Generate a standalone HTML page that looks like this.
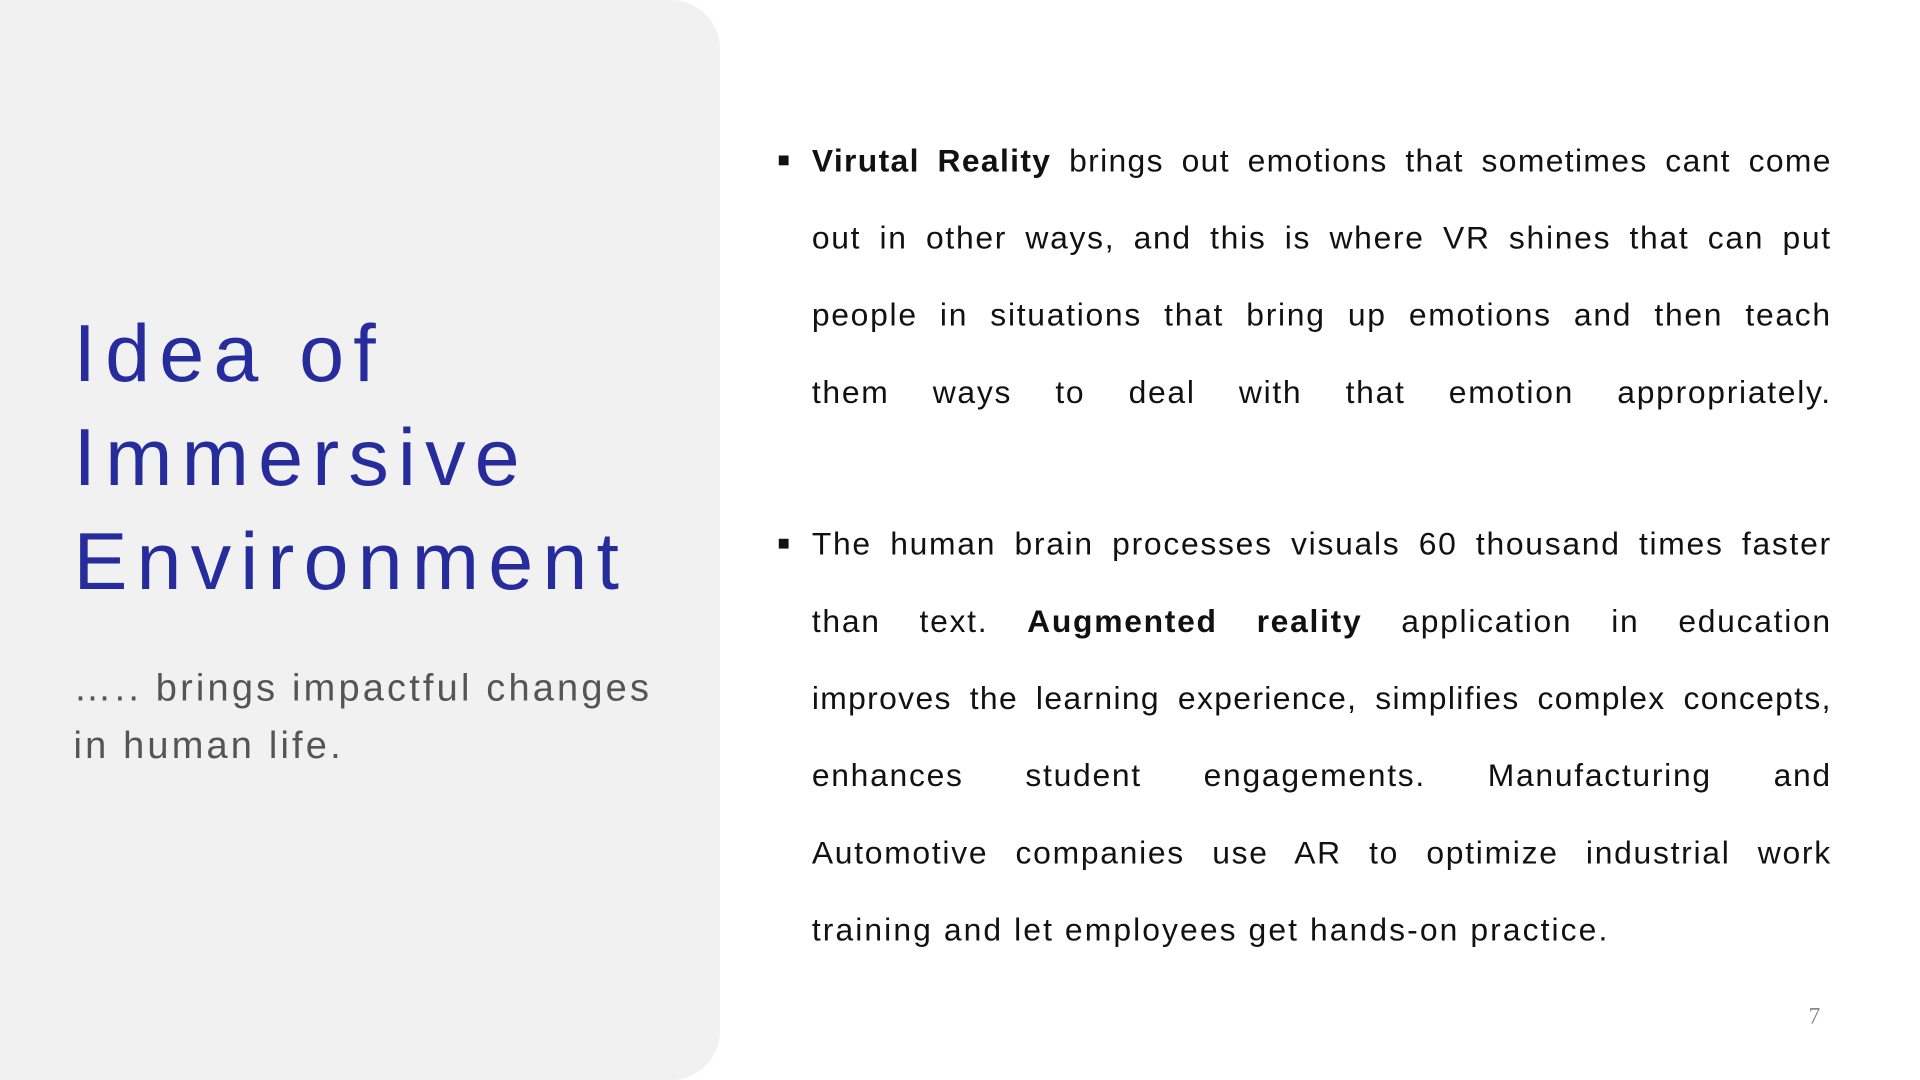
<!DOCTYPE html>
<html><head><meta charset="utf-8"><style>
html,body{margin:0;padding:0;background:#fff;overflow:hidden;width:1920px;height:1080px}
#w{position:absolute;left:0;top:0;width:1568px;height:882px;transform:scale(1.2245);transform-origin:0 0;font-family:"Liberation Sans",sans-serif}
.panel{position:absolute;left:0;top:0;width:588px;height:882px;background:#f1f1f1;border-radius:0 40px 40px 0}
.title{position:absolute;left:60px;top:246px;font-size:66px;line-height:85px;color:#272c9c;letter-spacing:7.5px}
.sub{position:absolute;left:60px;top:538px;font-size:31px;line-height:47px;color:#555;letter-spacing:2.6px}
.body{position:absolute;left:663px;width:833px;font-size:26px;color:#111;letter-spacing:1.4px}
.l{line-height:63px;text-align:justify;text-align-last:justify}
.l.e{text-align-last:left;letter-spacing:1.7px}
.b{position:absolute;left:636px;width:8px;height:8px;background:#111}
.pg{position:absolute;left:1477px;top:820px;font-family:"Liberation Serif",serif;font-size:19px;color:#888}
</style></head><body><div id="w">
<div class="panel"></div>
<div class="title">Idea of<br>Immersive<br>Environment</div>
<div class="sub">….. brings impactful changes<br>in human life.</div>
<div class="b" style="top:127px"></div>
<div class="body" style="top:100px">
<div class="l" style="letter-spacing:1.1px"><b>Virutal Reality</b> brings out emotions that sometimes cant come</div>
<div class="l">out in other ways, and this is where VR shines that can put</div>
<div class="l">people in situations that bring up emotions and then teach</div>
<div class="l">them ways to deal with that emotion appropriately.</div>
</div>
<div class="b" style="top:440px"></div>
<div class="body" style="top:413px">
<div class="l">The human brain processes visuals 60 thousand times faster</div>
<div class="l">than text. <b>Augmented reality</b> application in education</div>
<div class="l" style="letter-spacing:1.1px">improves the learning experience, simplifies complex concepts,</div>
<div class="l">enhances student engagements. Manufacturing and</div>
<div class="l">Automotive companies use AR to optimize industrial work</div>
<div class="l e">training and let employees get hands-on practice.</div>
</div>
<div class="pg">7</div>
</div></body></html>
